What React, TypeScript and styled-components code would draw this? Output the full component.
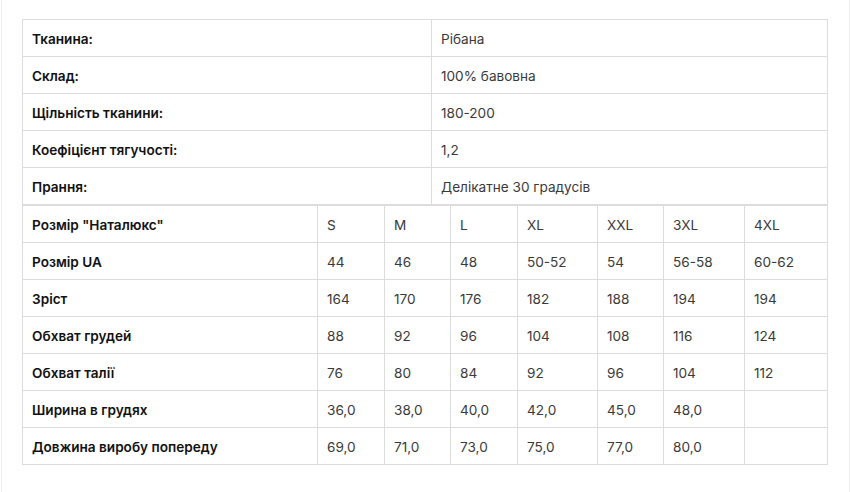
import { FC } from 'react'
import styled, { createGlobalStyle } from 'styled-components'

const GlobalStyle = createGlobalStyle`
  html, body {
    margin: 0;
    padding: 0;
    background: #fff;
  }
  body {
    font-family: Inter, "Noto Sans", "Liberation Sans", sans-serif;
    -webkit-font-smoothing: antialiased;
  }
`

const Wrapper = styled.div`
  box-sizing: border-box;
  width: 849px;
  margin-left: 1px;
  padding: 19px 20px 27px;
  border-left: 1px solid #efefef;
  border-right: 1px solid #efefef;
`

const Table = styled.table`
  width: 805px;
  border-collapse: collapse;
  table-layout: fixed;
  font-size: 13.6px;
`

const Cell = styled.td<{ $label?: boolean }>`
  height: 34px;
  padding: 2px 9px 0;
  border: 1px solid #dcdcdc;
  color: ${(p) => (p.$label ? '#111' : '#3a3a3a')};
  font-weight: ${(p) => (p.$label ? 600 : 400)};
  white-space: nowrap;
  vertical-align: middle;
`

const fabric: [string, string][] = [
  ['Тканина:', 'Рібана'],
  ['Склад:', '100% бавовна'],
  ['Щільність тканини:', '180-200'],
  ['Коефіцієнт тягучості:', '1,2'],
  ['Прання:', 'Делікатне 30 градусів'],
]

const sizeCols = [295, 67, 66, 67, 80, 66, 81, 83]

const sizes: string[][] = [
  ['Розмір "Наталюкс"', 'S', 'M', 'L', 'XL', 'XXL', '3XL', '4XL'],
  ['Розмір UA', '44', '46', '48', '50-52', '54', '56-58', '60-62'],
  ['Зріст', '164', '170', '176', '182', '188', '194', '194'],
  ['Обхват грудей', '88', '92', '96', '104', '108', '116', '124'],
  ['Обхват талії', '76', '80', '84', '92', '96', '104', '112'],
  ['Ширина в грудях', '36,0', '38,0', '40,0', '42,0', '45,0', '48,0', ''],
  ['Довжина виробу попереду', '69,0', '71,0', '73,0', '75,0', '77,0', '80,0', ''],
]

const App: FC = () => {
  return (
    <>
      <GlobalStyle />
      <Wrapper>
        <Table>
          <colgroup>
            <col style={{ width: 409 }} />
            <col style={{ width: 396 }} />
          </colgroup>
          <tbody>
            {fabric.map(([k, v]) => (
              <tr key={k}>
                <Cell $label>{k}</Cell>
                <Cell>{v}</Cell>
              </tr>
            ))}
          </tbody>
        </Table>
        <Table>
          <colgroup>
            {sizeCols.map((w, i) => (
              <col key={i} style={{ width: w }} />
            ))}
          </colgroup>
          <tbody>
            {sizes.map((row) => (
              <tr key={row[0]}>
                {row.map((c, i) => (
                  <Cell key={i} $label={i === 0}>
                    {c}
                  </Cell>
                ))}
              </tr>
            ))}
          </tbody>
        </Table>
      </Wrapper>
    </>
  )
}

export default App
